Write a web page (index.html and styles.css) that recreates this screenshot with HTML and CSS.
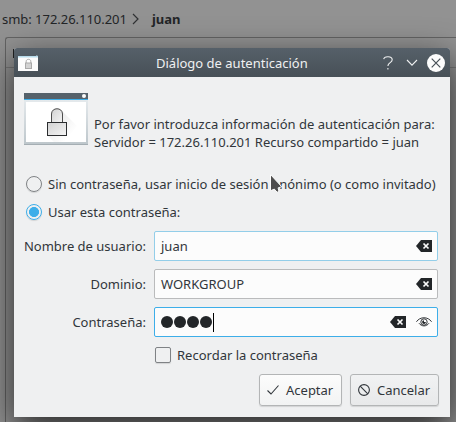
FILE: index.html
```html
<!DOCTYPE html>
<html lang="es">
<head>
<meta charset="utf-8">
<title>Diálogo de autenticación</title>
<link rel="stylesheet" href="styles.css">
</head>
<body>
<div class="desktop">
  <nav class="crumbs">
    <span class="host">smb: 172.26.110.201</span>
    <svg class="sep" width="7" height="12" viewBox="0 0 7 12"><path d="M1 1l5 5-5 5"/></svg>
    <b>juan</b>
  </nav>
  <div class="pane"><div class="pane-head"><span class="tick"></span></div></div>
</div>

<main class="dialog">
  <header class="titlebar">
    <svg class="app-icon" width="20" height="16" viewBox="0 0 20 16">
      <path fill="#fcfcfc" d="M0 1h20v15H0z"/><path fill="#b8dcec" d="M0 1h20v1.5H0z"/><path fill="#8b9aa3" d="M18 0h1.5v1H18z"/>
      <path fill="none" stroke="#a9a9a9" d="M8.2 8V6.3c0-2.6 4.6-2.6 4.6 0V8"/><rect x="7.5" y="8" width="6" height="5.5" fill="#d2d2d2" stroke="#a9a9a9"/>
    </svg>
    <h1>Diálogo de autenticación</h1>
    <svg class="help" width="10" height="14" viewBox="0 0 10 14"><path d="M.7 3.2C1.2-.2 9.2-.2 9.2 3.7c0 2.8-4.3 3-4.3 6.2"/><path d="M4.9 12v1.5"/></svg>
    <svg class="shade" width="12" height="8" viewBox="0 0 12 8"><path d="M1 1l5 5.2L11 1"/></svg>
    <svg class="close" width="18" height="18" viewBox="0 0 18 18"><circle cx="9" cy="9" r="9"/><path d="M4.7 4.7l8.6 8.6m0-8.6l-8.6 8.6"/></svg>
  </header>

  <div class="content">
    <div class="intro">
      <svg width="64" height="52" viewBox="0 0 64 52">
        <defs>
          <linearGradient id="frame" x2="0" y2="1"><stop offset="0" stop-color="#e5eaed"/><stop offset="1" stop-color="#bdc6cb"/></linearGradient>
          <linearGradient id="cast" x1="0" y1="0" x2="1" y2="1"><stop offset="0" stop-color="#bbb"/><stop offset=".8" stop-color="#fff"/></linearGradient>
          <linearGradient id="lock" x2="1" y2="1"><stop offset="0" stop-color="#d2d2d2"/><stop offset="1" stop-color="#f4f4f4"/></linearGradient>
        </defs>
        <path fill="url(#frame)" d="M0 6h64v46H0z"/><path fill="#a5aeb3" d="M0 51h64v1H0z"/>
        <path fill="#56626b" d="M0 0h64v6H0z"/><path fill="#3daee9" d="M0 6h64v1H0z"/><circle cx="60" cy="3" r="2" fill="#fcfcfc"/>
        <path fill="#fff" d="M2 9h60v40H2z"/>
        <path fill="url(#cast)" opacity=".4" d="M37 17l16 16-13 16H30l-7-7z"/>
        <path fill="url(#lock)" stroke="#4d4d4d" d="M27.5 29.5V21c0-7 11-7 11 0v8.500"/>
        <rect x="23.5" y="29.5" width="19" height="13" fill="url(#lock)" stroke="#2b2d2f"/>
      </svg>
      <p>Por favor introduzca información de autenticación para:<br>Servidor = 172.26.110.201 Recurso compartido = juan</p>
    </div>

    <div class="option"><span class="radio"></span><span>Sin contraseña, usar inicio de sesión anónimo (o como invitado)</span></div>
    <div class="option"><span class="radio checked"></span><span>Usar esta contraseña:</span></div>

    <div class="form">
      <span class="label">Nombre de usuario:</span>
      <div class="field hovered"><span class="value">juan</span>
        <svg class="clear" width="16" height="12" viewBox="0 0 16 12"><path fill="#232629" d="M0 6l5-6h11v12H5z"/><path class="x" d="M7.5 3.500l5 5m0-5l-5 5"/></svg>
      </div>
      <span class="label">Dominio:</span>
      <div class="field"><span class="value">WORKGROUP</span>
        <svg class="clear" width="16" height="12" viewBox="0 0 16 12"><path fill="#232629" d="M0 6l5-6h11v12H5z"/><path class="x" d="M7.5 3.500l5 5m0-5l-5 5"/></svg>
      </div>
      <span class="label">Contraseña:</span>
      <div class="field focused"><span class="dots"><i></i><i></i><i></i><i></i></span><span class="caret"></span>
        <svg class="clear" width="16" height="12" viewBox="0 0 16 12"><path fill="#232629" d="M0 6l5-6h11v12H5z"/><path class="x" d="M7.5 3.500l5 5m0-5l-5 5"/></svg>
        <svg class="eye" width="16" height="10" viewBox="0 0 16 10"><path d="M.4 4.800C4-.6 12-.6 15.600 4.800M3 6.200C5.500 9.800 10.500 9.800 13 6.200"/><circle cx="8" cy="5" r="3.200"/><path class="pupil" d="M8 3.200a1.900 1.900 0 1 0 1.900 1.900H8z"/></svg>
      </div>
    </div>

    <div class="remember"><span class="checkbox"></span><span>Recordar la contraseña</span></div>

    <div class="buttons">
      <div class="button accept"><svg width="12" height="10" viewBox="0 0 12 10"><path d="M.5 5.5L4 9l7.500-8.500"/></svg><span>Aceptar</span></div>
      <div class="button cancel"><svg width="12" height="12" viewBox="0 0 12 12"><circle cx="6" cy="6" r="5.4"/><path d="M2.2 2.2l7.6 7.6"/></svg><span>Cancelar</span></div>
    </div>
  </div>
</main>

<svg class="pointer" width="14" height="22" viewBox="0 0 14 22"><path d="M1.5 1.5v16.300l3.800-1.700 2.900 3.200 1.700-1.200-.8-3.200 3.600-1.200z"/></svg>
</body>
</html>
```
FILE: styles.css
```css
* { box-sizing: border-box; }

body {
  margin: 0;
  width: 456px;
  height: 422px;
  overflow: hidden;
  position: relative;
  font: 13px/18px "Noto Sans", sans-serif;
  color: #31363b;
  background: #929292;
  white-space: nowrap;
}

svg { display: block; flex: none; fill: none; }

/* Dimmed file manager behind the dialog */
.desktop { height: 422px; display: flex; flex-direction: column; color: #232527; }
.crumbs { display: flex; align-items: center; height: 37px; padding: 1px 0 0 2px; }
.host { letter-spacing: -.03px; }
.crumbs .sep { margin: 0 13px 0 5px; stroke: #303234; stroke-width: 1.2; }
.pane { flex: 1; margin-left: 5px; border: solid #646464; border-width: 1px 0 0 1px; border-top-left-radius: 3px; }
.pane-head { height: 30px; border-bottom: 1px solid #777; padding: 11px 0 0 7px; }
.tick { display: block; width: 1px; height: 9px; background: #222; }

/* Dialog window */
.dialog {
  position: absolute;
  left: 14px;
  top: 48px;
  width: 436px;
  height: 369px;
  background: #eff0f1;
  border-radius: 3px 3px 0 0;
  box-shadow: 0 12px 36px rgba(0, 0, 0, .74);
}
.titlebar {
  display: flex;
  align-items: center;
  height: 29px;
  padding: 0 5px 0 4px;
  border-radius: 3px 3px 0 0;
  background: linear-gradient(#566069, #475057);
  color: #eff0f1;
}
.titlebar h1 { flex: 1; margin: 0 0 0 38px; padding-left: 80px; font: inherit; }
.help, .shade { stroke: #eff0f1; stroke-width: 1.1; }
.help { margin-right: 13px; }
.shade { margin-right: 9px; }
.close { fill: #fcfcfc; stroke: #475057; stroke-width: 1.2; }
.close circle { stroke: none; }

.content { padding: 16px 11px 0 10px; }
.intro { display: flex; gap: 6px; height: 92px; }
.intro p { margin: 22px 0 0; }

.option { display: flex; align-items: center; gap: 6px; height: 18px; margin: -10px 0 20px 2px; }
.radio {
  flex: none;
  width: 16px;
  height: 16px;
  border: 1px solid #7f8285;
  border-radius: 50%;
  box-shadow: 0 1px 1px rgba(0, 0, 0, .12);
}
.radio.checked { border-color: #3daee9; background: radial-gradient(circle, #3daee9 4.7px, transparent 5.3px); }

.form {
  display: grid;
  grid-template-columns: 122px 284px;
  grid-auto-rows: 30px;
  gap: 8px;
  align-items: center;
  margin-top: -10px;
}
.label { justify-self: end; }
.field {
  display: flex;
  align-items: center;
  height: 30px;
  padding: 0 5px 0 6px;
  border: 1px solid #babbbc;
  border-radius: 2px;
  background: #fcfcfc;
}
.field.hovered { border-color: #93cee9; }
.field.focused { border-color: #3daee9; }
.clear { margin-left: auto; }
.clear .x { stroke: #fcfcfc; stroke-width: 1.7; }
.eye { margin-left: 10px; stroke: #232629; stroke-width: .9; }
.pupil { fill: #232629; stroke: none; }
.dots { display: flex; gap: 1px; }
.dots i { width: 12px; height: 12px; border-radius: 50%; background: #232629; }
.caret { width: 1px; height: 19px; margin-left: 1px; background: #000; }

.remember { display: flex; align-items: center; gap: 6px; margin: 9px 0 10px 131px; }
.checkbox {
  width: 16px;
  height: 16px;
  border: 1px solid #7f8285;
  border-radius: 2px;
  box-shadow: 0 1px 1px rgba(0, 0, 0, .12);
}

.buttons { display: flex; justify-content: flex-end; gap: 8px; }
.button {
  display: flex;
  align-items: center;
  height: 32px;
  border: 1px solid #b3b5b6;
  border-radius: 3px;
  box-shadow: 0 1px 1px rgba(0, 0, 0, .12);
  background: linear-gradient(#f1f2f3, #e8e9ea);
}
.button svg { stroke: #31363b; stroke-width: 1.1; }
.accept { width: 83px; padding-left: 7px; gap: 7px; background: linear-gradient(#fcfcfc, #f2f3f3); }
.cancel { width: 89px; padding-left: 7px; gap: 7px; }

.pointer { position: absolute; left: 269px; top: 173px; fill: #4d4d4d; stroke: #fcfcfc; }
```
